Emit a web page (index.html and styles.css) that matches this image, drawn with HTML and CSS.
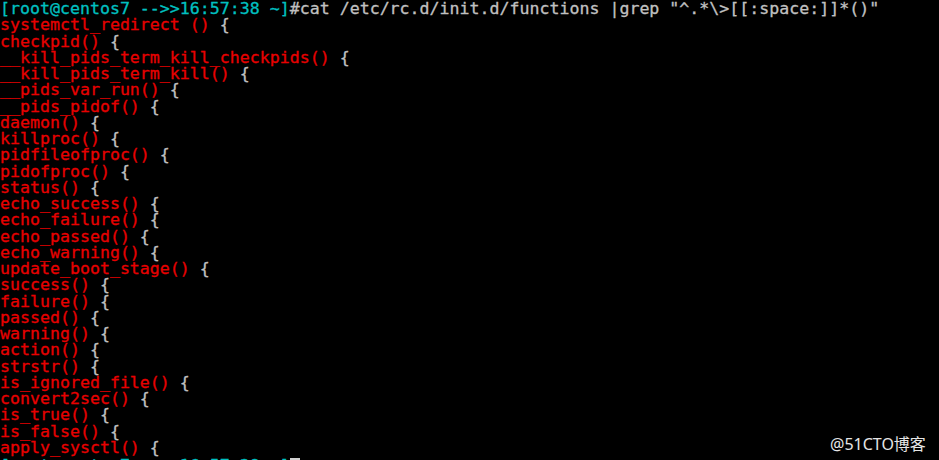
FILE: index.html
```html
<!DOCTYPE html>
<html>
<head>
<meta charset="utf-8">
<link rel="stylesheet" href="styles.css">
</head>
<body>
<div class="term">
<div class="ln"><span class="p">[root@centos7 --&gt;&gt;16:57:38 ~]</span>#cat /etc/rc.d/init.d/functions |grep "^.*\&gt;[[:space:]]*()"</div>
<div class="ln"><span class="m">systemctl_redirect ()</span> {</div>
<div class="ln"><span class="m">checkpid()</span> {</div>
<div class="ln"><span class="m">__kill_pids_term_kill_checkpids()</span> {</div>
<div class="ln"><span class="m">__kill_pids_term_kill()</span> {</div>
<div class="ln"><span class="m">__pids_var_run()</span> {</div>
<div class="ln"><span class="m">__pids_pidof()</span> {</div>
<div class="ln"><span class="m">daemon()</span> {</div>
<div class="ln"><span class="m">killproc()</span> {</div>
<div class="ln"><span class="m">pidfileofproc()</span> {</div>
<div class="ln"><span class="m">pidofproc()</span> {</div>
<div class="ln"><span class="m">status()</span> {</div>
<div class="ln"><span class="m">echo_success()</span> {</div>
<div class="ln"><span class="m">echo_failure()</span> {</div>
<div class="ln"><span class="m">echo_passed()</span> {</div>
<div class="ln"><span class="m">echo_warning()</span> {</div>
<div class="ln"><span class="m">update_boot_stage()</span> {</div>
<div class="ln"><span class="m">success()</span> {</div>
<div class="ln"><span class="m">failure()</span> {</div>
<div class="ln"><span class="m">passed()</span> {</div>
<div class="ln"><span class="m">warning()</span> {</div>
<div class="ln"><span class="m">action()</span> {</div>
<div class="ln"><span class="m">strstr()</span> {</div>
<div class="ln"><span class="m">is_ignored_file()</span> {</div>
<div class="ln"><span class="m">convert2sec()</span> {</div>
<div class="ln"><span class="m">is_true()</span> {</div>
<div class="ln"><span class="m">is_false()</span> {</div>
<div class="ln"><span class="m">apply_sysctl()</span> {</div>
<div class="ln last"><span class="p">[root@centos7 --&gt;&gt;16:57:38 ~]</span><span class="cur"> </span></div>
</div>
<div class="wm">@51CTO博客</div>
</body>
</html>
```
FILE: styles.css
```css
html, body {
  margin: 0;
  padding: 0;
  background: #000;
  overflow: hidden;
  height: 460px;
}
.term {
  font-family: "DejaVu Sans Mono", "Liberation Mono", monospace;
  font-size: 16.6px;
  line-height: 16.25px;
  color: #c0c0c0;
  padding-top: 1px;
  -webkit-text-stroke: 0.3px currentColor;
}
.ln {
  height: 16.25px;
  white-space: pre;
}
.last {
  padding-top: 2px;
}
.p {
  color: #00c0c0;
}
.m {
  color: #e80000;
}
.cur {
  display: inline-block;
  width: 10px;
  height: 15px;
  background: #d0d0d0;
  vertical-align: top;
}
.wm {
  position: absolute;
  left: 830px;
  top: 431px;
  font-family: "Noto Sans", "Noto Sans CJK SC", sans-serif;
  font-size: 16px;
  color: #e6e6e6;
}
```
